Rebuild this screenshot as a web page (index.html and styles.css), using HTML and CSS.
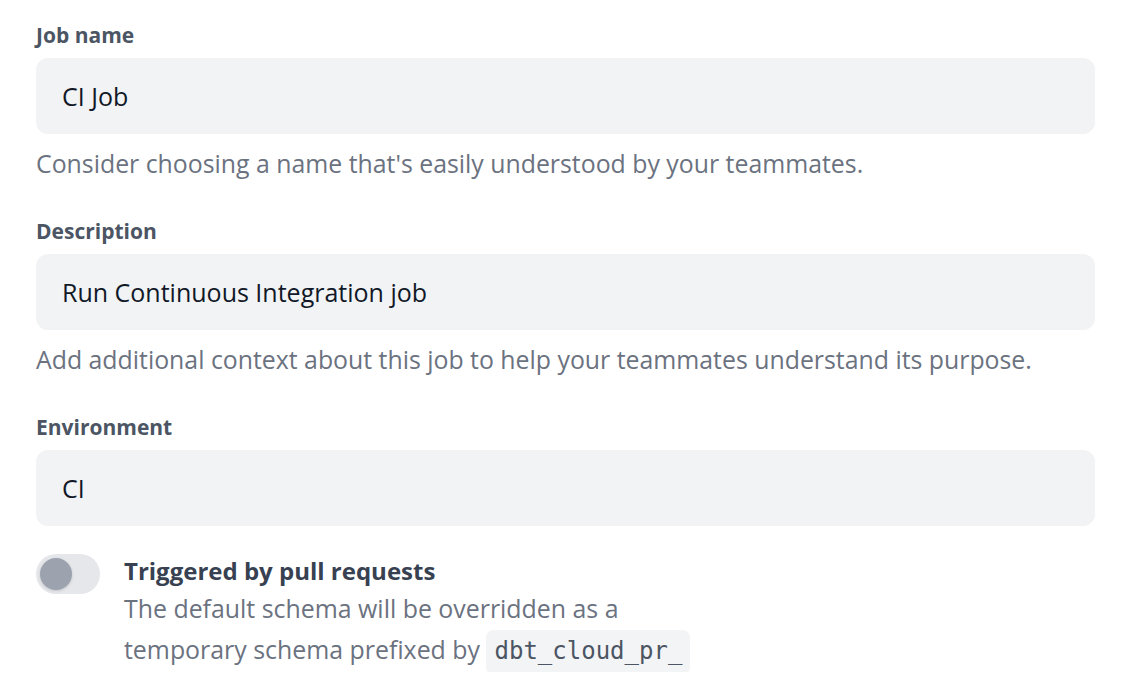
FILE: index.html
```html
<!DOCTYPE html>
<html>
<head>
<meta charset="utf-8">
<link rel="stylesheet" href="styles.css">
</head>
<body>
<div class="form">
  <div class="field">
    <div class="label">Job name</div>
    <div class="input">CI Job</div>
    <div class="help">Consider choosing a name that's easily understood by your teammates.</div>
  </div>
  <div class="field">
    <div class="label">Description</div>
    <div class="input">Run Continuous Integration job</div>
    <div class="help">Add additional context about this job to help your teammates understand its purpose.</div>
  </div>
  <div class="field">
    <div class="label">Environment</div>
    <div class="input">CI</div>
  </div>
  <div class="toggle-row">
    <div class="toggle"><div class="knob"></div></div>
    <div class="toggle-text">
      <div class="toggle-title">Triggered by pull requests</div>
      <div class="toggle-desc">The default schema will be overridden as a<br>temporary schema prefixed by <code class="chip">dbt_cloud_pr_</code></div>
    </div>
  </div>
</div>
</body>
</html>
```

FILE: styles.css
```css
html, body {
  margin: 0;
  padding: 0;
  background: #ffffff;
}
body {
  font-family: "Open Sans", "Noto Sans", sans-serif;
}
.form {
  padding: 21px 39px 0 36px;
  display: flex;
  flex-direction: column;
}
.field {
  display: flex;
  flex-direction: column;
  margin-bottom: 36px;
}
.field:nth-child(3) {
  margin-bottom: 28px;
}
.label {
  font-size: 21px;
  line-height: 28px;
  font-weight: 700;
  color: #4b5563;
  margin-bottom: 9px;
}
.input {
  height: 76px;
  background: #f2f3f5;
  border-radius: 12px;
  padding-left: 26px;
  display: flex;
  align-items: center;
  font-size: 25px;
  color: #111827;
}
.help {
  margin-top: 11px;
  font-size: 24.85px;
  line-height: 36px;
  color: #6b7280;
}
.toggle-row {
  display: flex;
  gap: 24px;
  align-items: flex-start;
}
.toggle {
  width: 64px;
  height: 40px;
  border-radius: 20px;
  background: #e5e7eb;
  display: flex;
  align-items: center;
  padding-left: 4px;
  box-sizing: border-box;
  flex-shrink: 0;
}
.knob {
  width: 32px;
  height: 32px;
  border-radius: 50%;
  background: #9ca3af;
  box-shadow: 0 1px 3px rgba(0,0,0,0.15);
}
.toggle-text {
  display: flex;
  flex-direction: column;
}
.toggle-title {
  font-size: 24px;
  line-height: 34px;
  font-weight: 700;
  color: #374151;
}
.toggle-desc {
  font-size: 24.9px;
  line-height: 41px;
  color: #6b7280;
}
.chip {
  font-family: "DejaVu Sans Mono", monospace;
  font-size: 24px;
  background: #f3f4f6;
  color: #4b5563;
  border-radius: 8px;
  padding: 7px 8px 10px;
}
```
